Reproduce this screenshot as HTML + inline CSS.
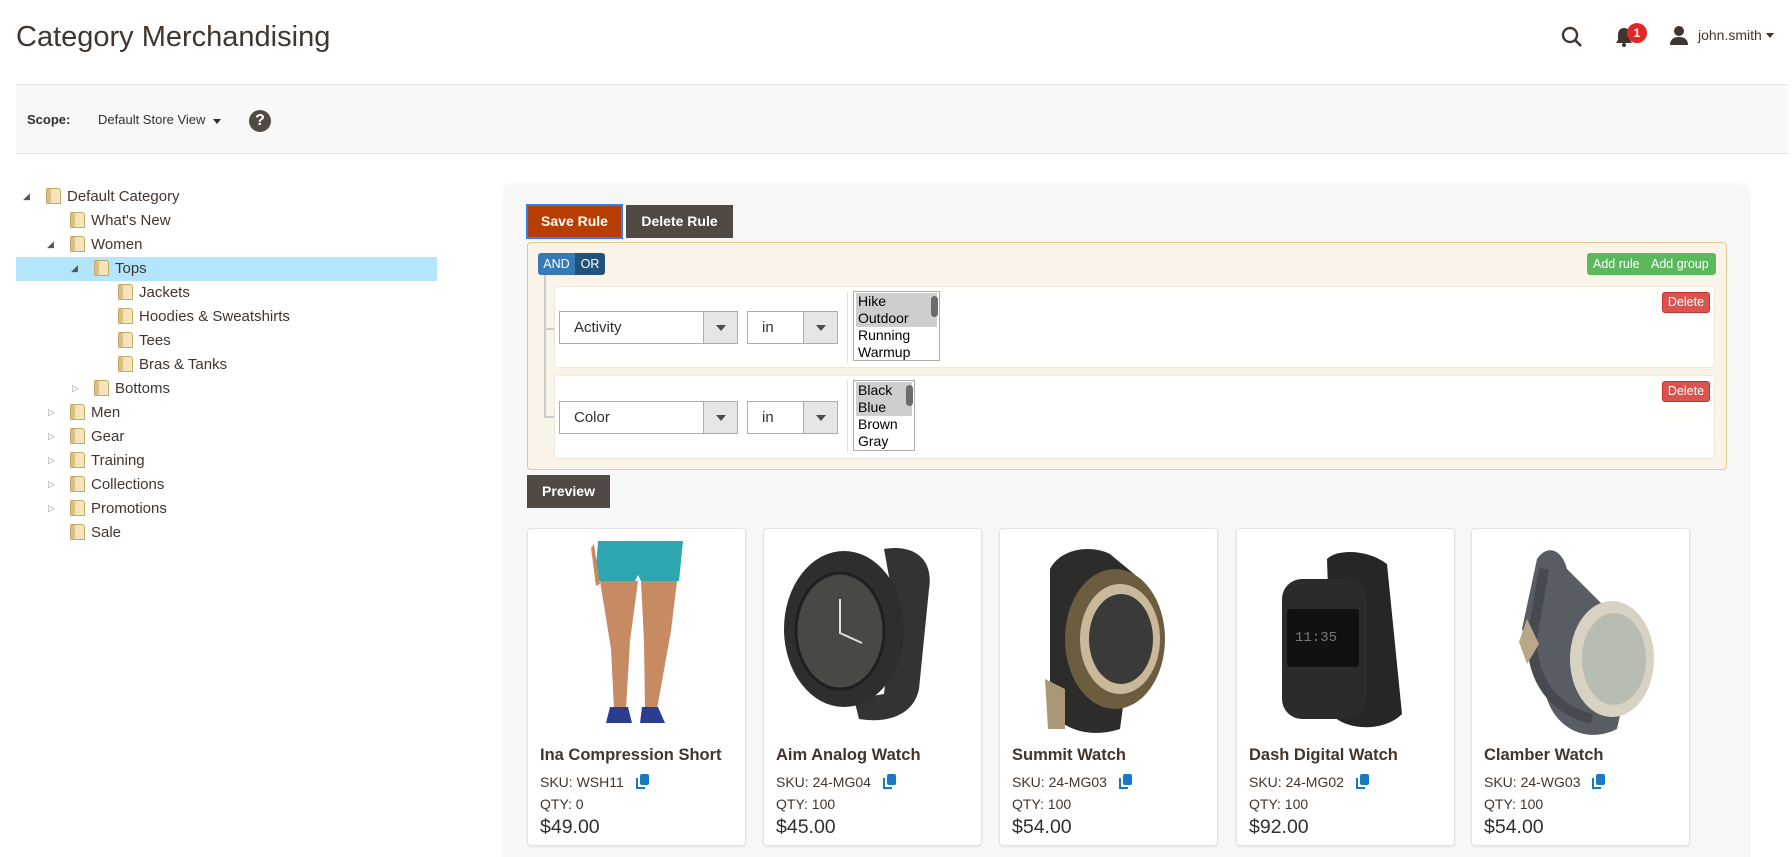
<!DOCTYPE html>
<html><head><meta charset="utf-8"><style>
*{box-sizing:border-box;margin:0;padding:0}
html,body{width:1792px;height:857px;overflow:hidden}
body{background:#fff;font-family:"Liberation Sans",sans-serif;color:#41362f;position:relative}
.a{position:absolute}
.t{position:absolute;white-space:nowrap}
.row{position:absolute;height:24px;line-height:24px;font-size:15px;color:#41362f}
.fold{display:inline-block;width:15px;height:16px;vertical-align:-3px;margin-right:6px;background:linear-gradient(90deg,#d9bf84 0 30%,#f3e4bb 30% 100%);border:1px solid #c9a866;border-radius:2px 3px 1px 1px}
.arr{position:absolute;font-size:9px;color:#555;width:10px}
.btn{position:absolute;color:#fff;font-weight:bold;font-size:14px;text-align:center}
.sel{position:absolute;background:#fff;border:1px solid #adadad;height:33px;font-size:15px;line-height:31px;padding-left:14px;color:#303030}
.sel .dd{position:absolute;right:0;top:0;bottom:0;width:34px;background:#e6e6e6;border-left:1px solid #adadad}
.sel .dd:after{content:"";position:absolute;left:12px;top:13px;border:5px solid transparent;border-top:6px solid #514943}
.ms{position:absolute;background:#fff;border:1px solid #adadad;font-size:14px;line-height:17px;color:#000;padding:1px 2px}
.ms div{padding-left:2px}
.ms .s{background:#cecece}
.ms .sb{position:absolute;top:4px;width:7px;height:21px;background:#6c6c6c;border-radius:4px}
.rr{position:absolute;background:#fffffd;border:1px solid #efe8dc;border-radius:4px}
.del{position:absolute;background:#d9534f;border:1px solid #c9302c;color:#fff;font-size:12.5px;border-radius:3px;text-align:center;line-height:19px}
.card{position:absolute;top:528px;width:219px;height:318px;background:#fff;border:1px solid #e3e3e3;border-radius:4px;box-shadow:0 1px 2px rgba(0,0,0,.08)}
.card .nm{position:absolute;left:12px;top:217px;font-size:16.5px;font-weight:bold;color:#41362f}
.card .sku{position:absolute;left:12px;top:245px;font-size:14px;color:#41362f}
.card .qty{position:absolute;left:12px;top:267px;font-size:14px;color:#41362f}
.card .pr{position:absolute;left:12px;top:287px;font-size:19.5px;color:#303030}
.cp{display:inline-block;vertical-align:-2px;margin-left:12px}
.card svg.img{position:absolute;left:0;top:10px}
</style></head><body>
<div class="t" style="left:16px;top:21px;font-size:29px;color:#41362f">Category Merchandising</div>
<svg class="a" style="left:1560px;top:25px" width="24" height="24" viewBox="0 0 24 24"><circle cx="10" cy="10" r="7" fill="none" stroke="#41362f" stroke-width="2.4"/><path d="M15 15l6 6" stroke="#41362f" stroke-width="2.6"/></svg>
<svg class="a" style="left:1614px;top:26px" width="20" height="22" viewBox="0 0 20 22"><path d="M10 2c-4 0-6 3-6 7v5l-2 3h16l-2-3V9c0-4-2-7-6-7z" fill="#41362f"/><circle cx="10" cy="19" r="2" fill="#41362f"/></svg>
<div class="a" style="left:1627px;top:23px;width:20px;height:20px;border-radius:50%;background:#e22626;color:#fff;font-size:12px;font-weight:bold;text-align:center;line-height:20px">1</div>
<svg class="a" style="left:1669px;top:25px" width="20" height="20" viewBox="0 0 20 20"><circle cx="10" cy="6" r="5" fill="#41362f"/><path d="M1 20c0-6 4-8 9-8s9 2 9 8z" fill="#41362f"/></svg>
<div class="t" style="left:1698px;top:27px;font-size:14px;color:#41362f">john.smith</div>
<div class="a" style="left:1766px;top:33px;border:4px solid transparent;border-top:5px solid #41362f"></div>
<div class="a" style="left:16px;top:84px;width:1772px;height:70px;background:#f8f8f8;border-top:1px solid #e3e3e3;border-bottom:1px solid #e3e3e3"></div>
<div class="t" style="left:27px;top:112px;font-size:13px;font-weight:bold;color:#303030">Scope:</div>
<div class="t" style="left:98px;top:112px;font-size:13px;color:#303030">Default Store View</div>
<div class="a" style="left:213px;top:119px;border:4px solid transparent;border-top:5px solid #303030"></div>
<div class="a" style="left:249px;top:110px;width:22px;height:22px;border-radius:50%;background:#514943;color:#fff;font-weight:bold;font-size:16px;text-align:center;line-height:22px">?</div>
<div class="a" style="left:16px;top:257px;width:421px;height:24px;background:#b3e5fc"></div>
<div class="row" style="left:46px;top:185px"><span class="fold"></span>Default Category</div>
<div class="arr" style="left:23px;top:191px">&#9698;</div>
<div class="row" style="left:70px;top:209px"><span class="fold"></span>What's New</div>
<div class="row" style="left:70px;top:233px"><span class="fold"></span>Women</div>
<div class="arr" style="left:47px;top:239px">&#9698;</div>
<div class="row" style="left:94px;top:257px"><span class="fold"></span>Tops</div>
<div class="arr" style="left:71px;top:263px">&#9698;</div>
<div class="row" style="left:118px;top:281px"><span class="fold"></span>Jackets</div>
<div class="row" style="left:118px;top:305px"><span class="fold"></span>Hoodies &amp; Sweatshirts</div>
<div class="row" style="left:118px;top:329px"><span class="fold"></span>Tees</div>
<div class="row" style="left:118px;top:353px"><span class="fold"></span>Bras &amp; Tanks</div>
<div class="row" style="left:94px;top:377px"><span class="fold"></span>Bottoms</div>
<div class="arr" style="left:72px;top:383px;color:#999">&#9655;</div>
<div class="row" style="left:70px;top:401px"><span class="fold"></span>Men</div>
<div class="arr" style="left:48px;top:407px;color:#999">&#9655;</div>
<div class="row" style="left:70px;top:425px"><span class="fold"></span>Gear</div>
<div class="arr" style="left:48px;top:431px;color:#999">&#9655;</div>
<div class="row" style="left:70px;top:449px"><span class="fold"></span>Training</div>
<div class="arr" style="left:48px;top:455px;color:#999">&#9655;</div>
<div class="row" style="left:70px;top:473px"><span class="fold"></span>Collections</div>
<div class="arr" style="left:48px;top:479px;color:#999">&#9655;</div>
<div class="row" style="left:70px;top:497px"><span class="fold"></span>Promotions</div>
<div class="arr" style="left:48px;top:503px;color:#999">&#9655;</div>
<div class="row" style="left:70px;top:521px"><span class="fold"></span>Sale</div>
<div class="a" style="left:504px;top:185px;width:1245px;height:690px;background:#f7f7f7;border-radius:6px;box-shadow:0 0 6px rgba(0,0,0,.06)"></div>
<div class="btn" style="left:526px;top:204px;width:97px;height:35px;background:#b73d00;border:2px solid #2f80ed;line-height:31px">Save Rule</div>
<div class="btn" style="left:626px;top:205px;width:107px;height:33px;background:#514943;line-height:33px">Delete Rule</div>
<div class="a" style="left:527px;top:242px;width:1200px;height:228px;background:#faf3e7;border:1px solid #e1c98d;border-radius:4px"></div>
<div class="a" style="left:538px;top:253px;width:67px;height:22px;border-radius:3px;overflow:hidden;font-size:12.5px;color:#fff;line-height:22px">
<div class="a" style="left:0;top:0;width:37px;height:22px;background:#337ab7;text-align:center">AND</div>
<div class="a" style="left:37px;top:0;width:30px;height:22px;background:#23527c;text-align:center">OR</div></div>
<div class="a" style="left:1587px;top:253px;width:129px;height:22px;background:#5cb85c;border-radius:3px;color:#fff;font-size:12.5px;line-height:22px"><span style="position:absolute;left:6px">Add rule</span><span style="position:absolute;left:64px">Add group</span></div>
<div class="a" style="left:544px;top:275px;width:2px;height:143px;background:#ccc"></div>
<div class="a" style="left:544px;top:328px;width:10px;height:2px;background:#ccc"></div>
<div class="a" style="left:544px;top:416px;width:10px;height:2px;background:#ccc"></div>
<div class="rr" style="left:554px;top:286px;width:1161px;height:82px"></div>
<div class="rr" style="left:554px;top:375px;width:1161px;height:84px"></div>
<div class="sel" style="left:559px;top:311px;width:179px">Activity<div class="dd"></div></div>
<div class="sel" style="left:747px;top:311px;width:91px">in<div class="dd"></div></div>
<div class="a" style="left:847px;top:291px;width:1px;height:72px;background:#e0e0e0"></div>
<div class="ms" style="left:853px;top:291px;width:87px;height:70px"><div class="s">Hike</div><div class="s">Outdoor</div><div>Running</div><div>Warmup</div><span class="sb" style="left:77px"></span></div>
<div class="del" style="left:1662px;top:292px;width:48px;height:21px">Delete</div>
<div class="sel" style="left:559px;top:401px;width:179px">Color<div class="dd"></div></div>
<div class="sel" style="left:747px;top:401px;width:91px">in<div class="dd"></div></div>
<div class="a" style="left:847px;top:380px;width:1px;height:73px;background:#e0e0e0"></div>
<div class="ms" style="left:853px;top:380px;width:62px;height:71px"><div class="s">Black</div><div class="s">Blue</div><div>Brown</div><div>Gray</div><span class="sb" style="left:52px"></span></div>
<div class="del" style="left:1662px;top:381px;width:48px;height:21px">Delete</div>
<div class="btn" style="left:527px;top:475px;width:83px;height:33px;background:#514943;line-height:33px">Preview</div>
<div class="card" style="left:527px">
<svg class="img" width="219" height="200" viewBox="0 0 219 200"><path d="M70 2h85l-4 40h-38l-3-6-3 6h-40z" fill="#2ea6b0"/><path d="M72 42h38l-8 60-4 68h-12l-3-60zM113 42h36l-6 50-14 78h-12l-1-68z" fill="#c78a63"/><path d="M66 5l6 40-4 2-5-38z" fill="#c78a63"/><path d="M82 168h18l4 16H78zM114 168h16l7 16h-25z" fill="#2a3d8f"/></svg>
<div class="nm">Ina Compression Short</div><div class="sku">SKU: WSH11<svg class="cp" width="13" height="15" viewBox="0 0 13 15"><rect x="4" y="0" width="9" height="11" rx="2" fill="#1979c3"/><path d="M1 4v10h8" fill="none" stroke="#1979c3" stroke-width="2"/></svg></div><div class="qty">QTY: 0</div><div class="pr">$49.00</div></div>
<div class="card" style="left:763px">
<svg class="img" width="219" height="200" viewBox="0 0 219 200"><path d="M120 10c30-5 50 10 45 40l-10 100c-5 25-30 35-60 30l-5-20 30-5 10-90z" fill="#333"/><ellipse cx="80" cy="90" rx="60" ry="78" fill="#2e2e2e"/><ellipse cx="76" cy="92" rx="44" ry="58" fill="#4a4845" stroke="#1f1f1f" stroke-width="3"/><path d="M76 60v34l22 10" stroke="#ddd" stroke-width="2" fill="none"/></svg>
<div class="nm">Aim Analog Watch</div><div class="sku">SKU: 24-MG04<svg class="cp" width="13" height="15" viewBox="0 0 13 15"><rect x="4" y="0" width="9" height="11" rx="2" fill="#1979c3"/><path d="M1 4v10h8" fill="none" stroke="#1979c3" stroke-width="2"/></svg></div><div class="qty">QTY: 100</div><div class="pr">$45.00</div></div>
<div class="card" style="left:999px">
<svg class="img" width="219" height="200" viewBox="0 0 219 200"><path d="M50 30c10-20 40-25 60-15l30 25-20 150c-30 10-60 0-70-20z" fill="#2c2c2a"/><ellipse cx="115" cy="100" rx="50" ry="70" fill="#6b5d3e"/><ellipse cx="120" cy="100" rx="40" ry="55" fill="#c9b99a"/><ellipse cx="121" cy="100" rx="32" ry="45" fill="#3a3b38"/><path d="M45 140l20 10v40H48z" fill="#a89878"/></svg>
<div class="nm">Summit Watch</div><div class="sku">SKU: 24-MG03<svg class="cp" width="13" height="15" viewBox="0 0 13 15"><rect x="4" y="0" width="9" height="11" rx="2" fill="#1979c3"/><path d="M1 4v10h8" fill="none" stroke="#1979c3" stroke-width="2"/></svg></div><div class="qty">QTY: 100</div><div class="pr">$54.00</div></div>
<div class="card" style="left:1236px">
<svg class="img" width="219" height="200" viewBox="0 0 219 200"><path d="M90 20c10-10 40-10 60 5l15 150c-20 20-60 15-70 0z" fill="#262626"/><rect x="45" y="40" width="85" height="140" rx="20" fill="#2b2b2b"/><rect x="50" y="70" width="72" height="58" rx="3" fill="#111"/><text x="58" y="102" font-size="14" fill="#777" font-family="Liberation Mono">11:35</text></svg>
<div class="nm">Dash Digital Watch</div><div class="sku">SKU: 24-MG02<svg class="cp" width="13" height="15" viewBox="0 0 13 15"><rect x="4" y="0" width="9" height="11" rx="2" fill="#1979c3"/><path d="M1 4v10h8" fill="none" stroke="#1979c3" stroke-width="2"/></svg></div><div class="qty">QTY: 100</div><div class="pr">$92.00</div></div>
<div class="card" style="left:1471px">
<svg class="img" width="219" height="200" viewBox="0 0 219 200"><path d="M65 20c10-15 25-10 30 10l70 70-20 90c-30 15-60 0-70-30L50 90z" fill="#575d63"/><path d="M72 30L60 100c0 40 20 70 60 80" stroke="#454a4f" stroke-width="10" fill="none"/><ellipse cx="140" cy="120" rx="42" ry="58" fill="#d8d2c2"/><ellipse cx="142" cy="120" rx="32" ry="46" fill="#b8bdb4"/><path d="M55 80l12 25-12 20-8-22z" fill="#b8a888"/></svg>
<div class="nm">Clamber Watch</div><div class="sku">SKU: 24-WG03<svg class="cp" width="13" height="15" viewBox="0 0 13 15"><rect x="4" y="0" width="9" height="11" rx="2" fill="#1979c3"/><path d="M1 4v10h8" fill="none" stroke="#1979c3" stroke-width="2"/></svg></div><div class="qty">QTY: 100</div><div class="pr">$54.00</div></div>
</body></html>
